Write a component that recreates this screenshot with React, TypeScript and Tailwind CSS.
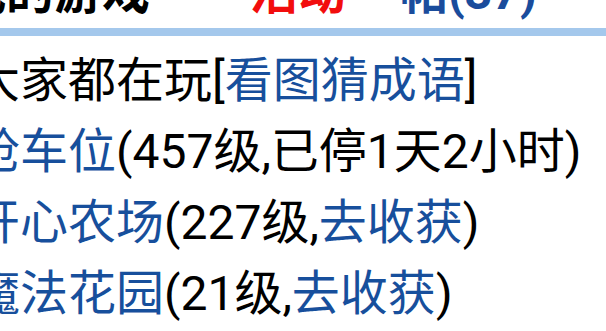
import React from 'react';

const Link: React.FC<{ children: React.ReactNode }> = ({ children }) => (
  <span className="text-[#174f9c]">{children}</span>
);

const App: React.FC = () => {
  return (
    <div className="w-[606px] h-[331px] overflow-hidden bg-white font-['Roboto','Noto_Sans_CJK_SC',sans-serif] text-black">
      {/* tabs, cut off at the top */}
      <div className="h-[28px] overflow-hidden">
        <div className="-mt-[31px] flex whitespace-nowrap text-[48px] leading-[48px] font-bold">
          <span className="-ml-[42px]">我的游戏</span>
          <span className="ml-[100px] text-[#f20d0d]">活动</span>
          <span className="ml-[54px] text-[#1a4c9c]">帖(37)</span>
        </div>
      </div>
      <div className="h-2 bg-[#a4c8ec]" />

      {/* game list */}
      <div className="-ml-[28px] pt-[9px] text-[48px] leading-[71px] whitespace-nowrap">
        <div>
          大家都在玩[<Link>看图猜成语</Link>]
        </div>
        <div>
          <Link>抢车位</Link>(457级,已停1天2小时)
        </div>
        <div>
          <Link>开心农场</Link>(227级,<Link>去收获</Link>)
        </div>
        <div>
          <Link>魔法花园</Link>(21级,<Link>去收获</Link>)
        </div>
      </div>
    </div>
  );
};

export default App;
